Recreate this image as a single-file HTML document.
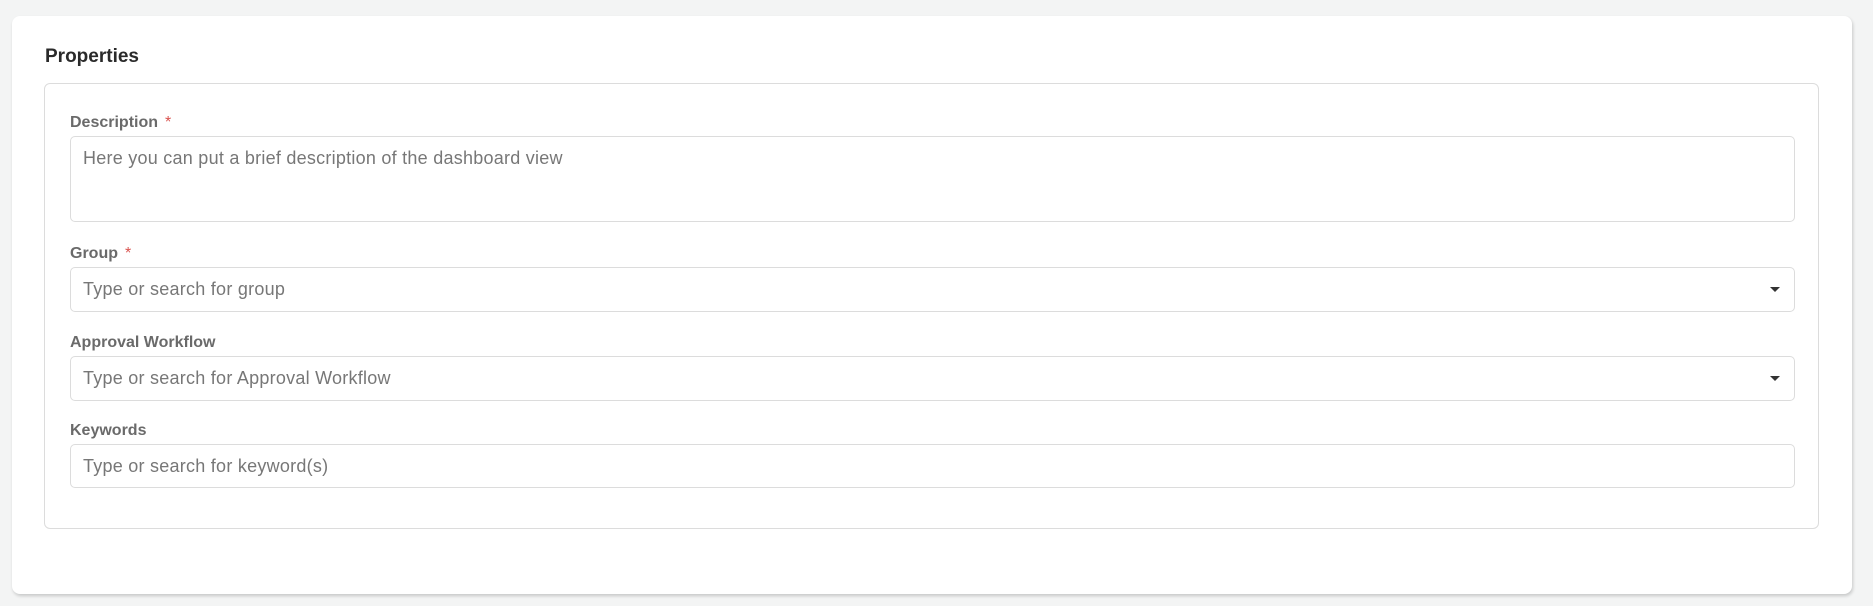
<!DOCTYPE html>
<html><head><style>
body{margin:0;width:1873px;height:606px;background:#f3f4f4;font-family:"Liberation Sans",sans-serif;position:relative;overflow:hidden}
.card{position:absolute;left:12px;top:16px;width:1840px;height:578px;background:#fff;border-radius:8px;box-shadow:1px 2px 3px rgba(0,0,0,.18)}
.title{position:absolute;left:45px;top:46px;font-size:19px;font-weight:bold;color:#2a2a2a}
.box{position:absolute;left:44px;top:83px;width:1775px;height:446px;border:1px solid #dcdcdc;border-radius:6px;box-sizing:border-box}
.lbl{position:absolute;left:70px;font-size:16px;font-weight:bold;color:#6a6a6a}
.lbl i{color:#d9534f;font-style:normal;margin-left:7px;font-weight:normal}
.in{position:absolute;left:70px;width:1725px;border:1px solid #dcdcdc;border-radius:5px;box-sizing:border-box;font-size:18px;letter-spacing:0.25px;color:#777;padding-left:12px}
.arr{position:absolute;right:14px;top:50%;margin-top:-3px;width:0;height:0;border-left:5px solid transparent;border-right:5px solid transparent;border-top:5px solid #333}
</style></head><body>
<div class="card"></div>
<div class="title">Properties</div>
<div class="box"></div>
<div class="lbl" style="top:114px">Description<i>*</i></div>
<div class="in" style="top:136px;height:86px;padding-top:11px">Here you can put a brief description of the dashboard view</div>
<div class="lbl" style="top:245px">Group<i>*</i></div>
<div class="in" style="top:267px;height:45px;line-height:43px">Type or search for group<span class="arr"></span></div>
<div class="lbl" style="top:334px">Approval Workflow</div>
<div class="in" style="top:356px;height:45px;line-height:43px">Type or search for Approval Workflow<span class="arr"></span></div>
<div class="lbl" style="top:422px">Keywords</div>
<div class="in" style="top:444px;height:44px;line-height:42px">Type or search for keyword(s)</div>
</body></html>
